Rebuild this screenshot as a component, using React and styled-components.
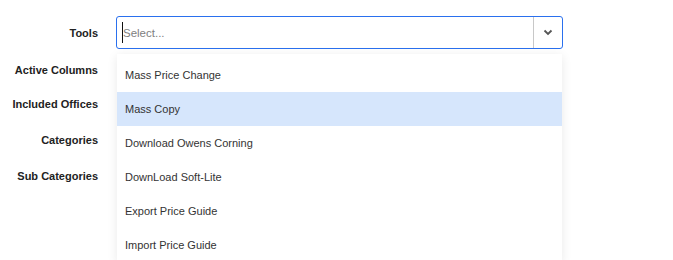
import styled, { createGlobalStyle } from "styled-components";

const GlobalStyle = createGlobalStyle`
  html, body {
    margin: 0;
    padding: 0;
    background: #fff;
    font-family: "Liberation Sans", Arial, sans-serif;
  }
`;

const Form = styled.div`
  width: 673px;
  height: 260px;
  padding-top: 16px;
  box-sizing: border-box;
  overflow: hidden;
`;

const Row = styled.div`
  display: grid;
  grid-template-columns: 98px 447px;
  column-gap: 18px;
  align-items: center;
  height: ${(p) => p.$height}px;
  margin-top: ${(p) => p.$gap || 0}px;
  position: relative;
  z-index: ${(p) => (p.$raised ? 5 : "auto")};
`;

const Label = styled.div`
  text-align: right;
  font-size: 11px;
  font-weight: 700;
  color: #222;
`;

const Control = styled.div`
  position: relative;
  height: 33px;
  box-sizing: border-box;
  border: 1px solid #2a70ee;
  border-radius: 3px;
  display: flex;
  align-items: center;
  background: #fff;
`;

const ValueArea = styled.div`
  flex: 1;
  display: flex;
  align-items: center;
  padding-left: 5px;
  font-size: 11.5px;
  color: #808080;
`;

const Caret = styled.span`
  width: 1px;
  height: 21px;
  background: #111;
  margin-right: 0;
`;

const Divider = styled.span`
  width: 1px;
  align-self: stretch;
  background: #c8c8c8;
`;

const Indicator = styled.div`
  width: 28px;
  display: flex;
  justify-content: center;
  align-items: center;
  color: #555;
`;

const Menu = styled.div`
  position: absolute;
  top: 37px;
  left: 0;
  right: 0;
  background: #fff;
  padding-top: 4px;
  box-shadow: 0 2px 10px rgba(0, 0, 0, 0.09);
`;

const Option = styled.div`
  height: 34px;
  display: flex;
  align-items: center;
  padding: 0 8px;
  font-size: 11px;
  color: #333;
  background: ${(p) => (p.$active ? "#d6e6fc" : "transparent")};
`;

const tools = [
  "Mass Price Change",
  "Mass Copy",
  "Download Owens Corning",
  "DownLoad Soft-Lite",
  "Export Price Guide",
  "Import Price Guide",
];

const rows = [
  { label: "Active Columns", height: 34, gap: 4 },
  { label: "Included Offices", height: 34, gap: 0 },
  { label: "Categories", height: 34, gap: 2 },
  { label: "Sub Categories", height: 34, gap: 2 },
];

export default function App() {
  return (
    <>
      <GlobalStyle />
      <Form>
        <Row $height={33} $raised>
          <Label>Tools</Label>
          <Control>
            <ValueArea>
              <Caret />
              Select...
            </ValueArea>
            <Divider />
            <Indicator>
              <svg width="10" height="7" viewBox="0 0 10 7">
                <polyline
                  points="1.5,1.5 5,5 8.5,1.5"
                  fill="none"
                  stroke="currentColor"
                  strokeWidth="1.8"
                />
              </svg>
            </Indicator>
            <Menu>
              {tools.map((t, i) => (
                <Option key={t} $active={i === 1}>
                  {t}
                </Option>
              ))}
            </Menu>
          </Control>
        </Row>
        {rows.map((r) => (
          <Row key={r.label} $height={r.height} $gap={r.gap}>
            <Label>{r.label}</Label>
            <div />
          </Row>
        ))}
      </Form>
    </>
  );
}
